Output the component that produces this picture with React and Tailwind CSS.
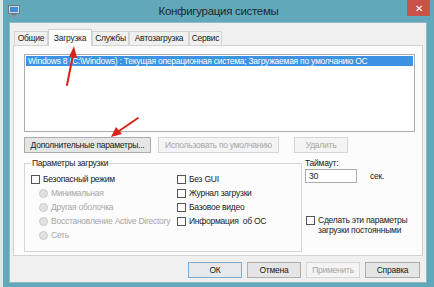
import React from "react";

const F = { fontFamily: '"Liberation Sans", Arial, sans-serif' };

function Btn({ children, w, disabled, def }) {
  return (
    <div
      className={`h-[16px] flex items-center justify-center border whitespace-nowrap ${
        disabled
          ? "border-[#d6d6d6] bg-[#f4f4f4] text-[#a6a6a6]"
          : def
          ? "border-[#7faad2] bg-[#e6e9ec] text-[#1a1a1a]"
          : "border-[#adadad] bg-[#e5e5e5] text-[#1a1a1a]"
      } ${w}`}
    >
      {children}
    </div>
  );
}

function Check({ children }) {
  return (
    <div className="h-[14px] flex items-center gap-[3px] whitespace-nowrap">
      <div className="w-[9px] h-[9px] border border-[#555] bg-white shrink-0" />
      <span>{children}</span>
    </div>
  );
}

function Radio({ children }) {
  return (
    <div className="h-[14px] flex items-center gap-[3px] pl-[8px] text-[#a6a6a6] whitespace-nowrap">
      <div className="w-[9px] h-[9px] rounded-full border border-[#c9c9c9] bg-[#e2e2e2] shrink-0" />
      <span>{children}</span>
    </div>
  );
}

function Tab({ children, w, active }) {
  return (
    <div
      className={`flex items-center justify-center border border-b-0 whitespace-nowrap ${
        active
          ? "h-[17px] bg-white border-[#cfcfcf] -mb-px z-10 relative"
          : "h-[14px] bg-[#f0f0f0] border-[#d4d4d4]"
      } ${w}`}
    >
      {children}
    </div>
  );
}

export default function App() {
  return (
    <div
      className="w-[434px] h-[287px] bg-[#62a8bb] flex overflow-hidden relative text-[#1a1a1a] text-[8.5px] tracking-[-0.25px]"
      style={F}
    >
      <div className="w-[3px] h-full bg-[#dfe5e7]" />
      <div className="flex-1 flex flex-col">
        {/* Title bar */}
        <div className="h-[22px] flex items-start">
          <div className="w-[17px] h-[22px] flex items-center justify-end">
            <svg width="12" height="12" viewBox="0 0 12 12">
              <rect x="0.5" y="0.5" width="11" height="8" fill="#cfd6dc" stroke="#6c7a86" />
              <rect x="2" y="2" width="8" height="5" fill="#3f8fd6" />
              <rect x="4" y="9" width="4" height="1.5" fill="#6c7a86" />
              <rect x="2" y="10.5" width="8" height="1.5" fill="#8b97a1" />
            </svg>
          </div>
          <div className="flex-1 h-[22px] flex items-center justify-center text-[11.5px] tracking-[-0.3px] text-[#1b2a30] pl-[10px] pt-[2px]">
            Конфигурация системы
          </div>
          <div className="w-[23px] h-[16px] bg-[#c9524b] flex items-center justify-center text-white text-[10px] mr-[4px] tracking-normal">
            ✕
          </div>
        </div>
        {/* Body */}
        <div className="ml-[6px] mr-[7px] h-[261px] bg-[#f0f0f0] border border-[#8fb9c6] px-[3px] pt-[5px] flex flex-col">
          {/* tabs */}
          <div className="flex items-end pl-[1px] h-[17px]">
            <Tab w="w-[34px]">Общие</Tab>
            <Tab w="w-[44px]" active>
              Загрузка
            </Tab>
            <Tab w="w-[37px]">Службы</Tab>
            <Tab w="w-[60px]">Автозагрузка</Tab>
            <Tab w="w-[33px]">Сервис</Tab>
          </div>
          {/* panel */}
          <div className="w-[410px] h-[211px] bg-[#fcfcfc] border border-[#d2d2d2] pl-[10px] pt-[8px] flex flex-col">
            <div className="w-[391px] h-[78px] bg-white border border-[#acacac] p-px">
              <div className="h-[10px] bg-[#3d93e3] text-white flex items-center pl-[2px] leading-none whitespace-nowrap">
                Windows 8 (C:\Windows) : Текущая операционная система; Загружаемая по умолчанию ОС
              </div>
            </div>
            <div className="flex gap-[7px] mt-[5px]">
              <Btn w="w-[127px]">Дополнительные параметры...</Btn>
              <Btn w="w-[121px]" disabled>
                Использовать по умолчанию
              </Btn>
              <div className="w-px" />
              <Btn w="w-[54px]" disabled>
                Удалить
              </Btn>
            </div>
            <div className="flex mt-[6px]">
              <fieldset className="w-[278px] h-[93px] border border-[#d5d5d5] pl-[6px] pr-0 pb-0 pt-[4px] m-0 min-w-0">
                <legend className="px-[1px] leading-[9px] whitespace-nowrap">Параметры загрузки</legend>
                <div className="flex">
                  <div className="w-[146px] flex flex-col">
                    <Check>Безопасный режим</Check>
                    <Radio>Минимальная</Radio>
                    <Radio>Другая оболочка</Radio>
                    <Radio>Восстановление Active Directory</Radio>
                    <Radio>Сеть</Radio>
                  </div>
                  <div className="flex flex-col">
                    <Check>Без GUI</Check>
                    <Check>Журнал загрузки</Check>
                    <Check>Базовое видео</Check>
                    <Check>Информация&nbsp; об ОС</Check>
                  </div>
                </div>
              </fieldset>
              <div className="ml-[3px] flex flex-col">
                <div className="h-[9px] leading-[9px]">Таймаут:</div>
                <div className="flex items-center mt-[1px]">
                  <div className="w-[52px] h-[14px] border border-[#acacac] bg-white flex items-center pl-[3px]">
                    30
                  </div>
                  <span className="ml-[13px]">сек.</span>
                </div>
                <div className="flex items-start gap-[3px] mt-[32px] ml-[1px]">
                  <div className="w-[9px] h-[9px] border border-[#555] bg-white shrink-0 mt-[1px]" />
                  <div className="leading-[10px] whitespace-nowrap">
                    Сделать эти параметры
                    <br />
                    загрузки постоянными
                  </div>
                </div>
              </div>
            </div>
          </div>
          {/* bottom buttons */}
          <div className="flex justify-end gap-[5px] mt-[6px] pr-[3px]">
            <Btn w="w-[54px]" def>
              ОК
            </Btn>
            <Btn w="w-[54px]">Отмена</Btn>
            <Btn w="w-[54px]" disabled>
              Применить
            </Btn>
            <Btn w="w-[55px]">Справка</Btn>
          </div>
        </div>
      </div>
      {/* red annotation arrows */}
      <svg className="absolute left-0 top-0 pointer-events-none" width="434" height="287">
        <line x1="67" y1="85" x2="73" y2="55" stroke="#d8231b" strokeWidth="2" strokeLinecap="round" />
        <polygon points="74,46 69,57 77,58" fill="#d8231b" />
        <line x1="138" y1="118" x2="119" y2="131" stroke="#d8231b" strokeWidth="2" strokeLinecap="round" />
        <polygon points="111,137 116,127 122,134" fill="#d8231b" />
      </svg>
    </div>
  );
}
